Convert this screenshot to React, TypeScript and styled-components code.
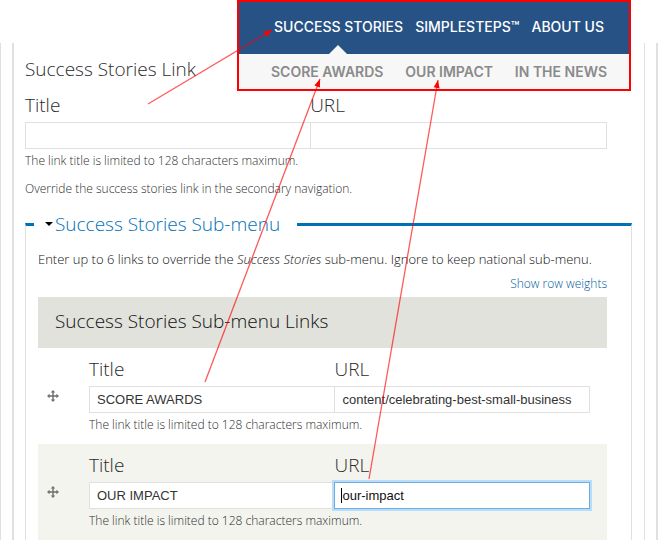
import styled, { createGlobalStyle, css } from "styled-components";

const color = {
  text: "#111111",
  title: "#2b2b2b",
  muted: "#2e2e2e",
  link: "#0071b8",
  linkDark: "#005c9c",
  line: "#e0e0e0",
  navy: "#265286",
  red: "#ff0000",
};

type LinkFieldsProps = {
  id: string;
  title?: string;
  url?: string;
  focused?: boolean;
};

const rows = [
  {
    id: "score-awards",
    title: "SCORE AWARDS",
    url: "content/celebrating-best-small-business",
  },
  { id: "our-impact", title: "OUR IMPACT", url: "our-impact", focused: true },
];

const arrows = [
  { from: [148, 104], to: [272, 30] },
  { from: [205, 382], to: [320, 79] },
  { from: [369, 479], to: [438, 80] },
];

function LinkFields({ id, title = "", url = "", focused }: LinkFieldsProps) {
  return (
    <>
      <FieldPair>
        <Field>
          <Label htmlFor={`${id}-title`}>Title</Label>
          <TextInput id={`${id}-title`} defaultValue={title} $joined />
        </Field>
        <Field>
          <Label htmlFor={`${id}-url`}>URL</Label>
          <InputWrap>
            <TextInput id={`${id}-url`} defaultValue={url} $focused={focused} />
            {focused && <Caret />}
          </InputWrap>
        </Field>
      </FieldPair>
      <Help>The link title is limited to 128 characters maximum.</Help>
    </>
  );
}

function MoveIcon() {
  return (
    <svg width="12" height="12" viewBox="0 0 12 12" fill="#6e6e6e">
      <path d="M6 0 8.2 2.6H6.7V5.3H9.4V3.8L12 6 9.4 8.2V6.7H6.7V9.4H8.2L6 12 3.8 9.4H5.3V6.7H2.6V8.2L0 6 2.6 3.8V5.3H5.3V2.6H3.8Z" />
    </svg>
  );
}

function NavPreview() {
  return (
    <StyledNav>
      <PrimaryLinks>
        <NavLink href="#stories" $active>
          SUCCESS STORIES
        </NavLink>
        <NavLink href="#simplesteps">SIMPLESTEPS™</NavLink>
        <NavLink href="#about">ABOUT US</NavLink>
      </PrimaryLinks>
      <SecondaryLinks>
        <NavLink href="#awards">SCORE AWARDS</NavLink>
        <NavLink href="#impact">OUR IMPACT</NavLink>
        <NavLink href="#news">IN THE NEWS</NavLink>
      </SecondaryLinks>
    </StyledNav>
  );
}

function Arrows() {
  return (
    <ArrowLayer width="672" height="540" viewBox="0 0 672 540">
      {arrows.map(({ from, to }) => {
        const angle =
          (Math.atan2(to[1] - from[1], to[0] - from[0]) * 180) / Math.PI;
        return (
          <g key={from[0]}>
            <line
              x1={from[0]}
              y1={from[1]}
              x2={to[0]}
              y2={to[1]}
              stroke={color.red}
              strokeWidth="1.3"
              strokeOpacity="0.65"
            />
            <path
              d="M0 0-8-3V3Z"
              fill={color.red}
              transform={`translate(${to[0]} ${to[1]}) rotate(${angle})`}
            />
          </g>
        );
      })}
    </ArrowLayer>
  );
}

export default function App() {
  return (
    <Page>
      <GlobalStyle />
      <OuterPanel>
        <InnerPanel>
          <LinkSection>
            <Heading>Success Stories Link</Heading>
            <LinkFields id="stories" />
            <Override>
              Override the success stories link in the secondary navigation.
            </Override>
          </LinkSection>
          <SubMenu>
            <Legend>
              <Toggle type="button">
                <Triangle />
                Success Stories Sub-menu
              </Toggle>
            </Legend>
            <Intro>
              Enter up to 6 links to override the <em>Success Stories</em>{" "}
              sub-menu. Ignore to keep national sub-menu.
            </Intro>
            <WeightsLink href="#weights">Show row weights</WeightsLink>
            <LinkTable>
              <thead>
                <tr>
                  <HeaderCell colSpan={2}>
                    Success Stories Sub-menu Links
                  </HeaderCell>
                </tr>
              </thead>
              <tbody>
                {rows.map((row) => (
                  <LinkRow key={row.id}>
                    <HandleCell>
                      <Handle type="button" aria-label="Drag to re-order">
                        <MoveIcon />
                      </Handle>
                    </HandleCell>
                    <FieldsCell>
                      <LinkFields {...row} />
                    </FieldsCell>
                  </LinkRow>
                ))}
              </tbody>
            </LinkTable>
          </SubMenu>
        </InnerPanel>
      </OuterPanel>
      <NavPreview />
      <Arrows />
    </Page>
  );
}

const GlobalStyle = createGlobalStyle`
  * {
    box-sizing: border-box;
  }

  body {
    margin: 0;
    background-color: #ffffff;
    color: ${color.text};
    font-family: "Open Sans", sans-serif;
    font-size: 13px;
    font-weight: 300;
    line-height: 20px;
  }
`;

const lightTitle = css`
  font-size: 19px;
  font-weight: 300;
  line-height: 26px;
`;

// Page frame
const Page = styled.main`
  position: relative;
  display: flex;
  min-height: 100vh;
  padding: 43px 14px 0 0;
`;

const OuterPanel = styled.div`
  flex: 1;
  display: flex;
  padding-right: 11px;
  padding-left: 11px;
  border: solid ${color.line};
  border-width: 0 2px 0 1px;
`;

const InnerPanel = styled.div`
  flex: 1;
  display: flex;
  flex-direction: column;
  padding: 13px 12px 0 11px;
  border: solid ${color.line};
  border-width: 0 1px 0 2px;
`;

const LinkSection = styled.section`
  padding-right: 25px;
`;

const Heading = styled.h2`
  margin: 0 0 10px;
  color: ${color.title};
  ${lightTitle};
`;

// Fields
const FieldPair = styled.div`
  display: grid;
  grid-template-columns: 49fr 51fr;
`;

const Field = styled.div`
  display: flex;
  flex-direction: column;
  gap: 4px;
  min-width: 0;
`;

const Label = styled.label`
  color: ${color.title};
  ${lightTitle};
`;

const InputWrap = styled.div`
  position: relative;
  display: flex;
`;

const TextInput = styled.input<{ $joined?: boolean; $focused?: boolean }>`
  width: 100%;
  height: 27px;
  padding: 0 7px;
  border: 1px solid ${color.line};
  border-right-width: ${({ $joined }) => ($joined ? "0" : "1px")};
  border-radius: 0;
  outline: none;
  background-color: #ffffff;
  color: #333333;
  font-family: "Liberation Sans", Arial, sans-serif;
  font-size: 13px;

  ${({ $focused }) =>
    $focused &&
    css`
      border-color: #6caee0;
      box-shadow: 0 0 0 2px #b9dcfa;
      color: #111111;
    `}
`;

const Caret = styled.span`
  position: absolute;
  top: 6px;
  left: 7px;
  width: 1px;
  height: 15px;
  background-color: #000000;
`;

const Help = styled.p`
  margin: 2px 0 0;
  color: ${color.muted};
  font-size: 12px;
`;

const Override = styled(Help)`
  margin: 8px 0 0;
`;

// Sub-menu
const SubMenu = styled.fieldset`
  flex: 1;
  min-width: 0;
  margin: 12px 0 0;
  padding: 12px 24px 0 12px;
  border: solid ${color.line};
  border-width: 3px 1px 0;
  border-top-color: ${color.link};
`;

const Legend = styled.legend`
  margin-left: -4px;
  padding: 0 17px 0 11px;
`;

const Toggle = styled.button`
  display: flex;
  align-items: center;
  gap: 2px;
  padding: 0;
  border: 0;
  background: none;
  color: ${color.link};
  font-family: inherit;
  ${lightTitle};
`;

const Triangle = styled.span`
  border: solid transparent;
  border-width: 4px 4px 0;
  border-top-color: #000000;
`;

const Intro = styled.p`
  margin: 0;
`;

const WeightsLink = styled.a`
  display: block;
  width: fit-content;
  margin: 5px 0 3px auto;
  color: ${color.linkDark};
  font-size: 12px;
  text-decoration: none;
`;

const LinkTable = styled.table`
  width: 100%;
  border-collapse: collapse;
`;

const HeaderCell = styled.th`
  height: 51px;
  padding: 0 17px 3px;
  background-color: #e1e2dc;
  color: ${color.text};
  text-align: left;
  ${lightTitle};
`;

const LinkRow = styled.tr`
  &:nth-child(even) {
    background-color: #f3f4ee;
  }
`;

const HandleCell = styled.td`
  width: 51px;
  padding: 0 0 0 9px;
  vertical-align: middle;
`;

const Handle = styled.button`
  display: flex;
  padding: 0;
  border: 0;
  background: none;
  cursor: move;
`;

const FieldsCell = styled.td`
  padding: 8px 17px 9px 0;
`;

// Navigation preview laid over the form
const StyledNav = styled.nav`
  position: absolute;
  top: 0;
  left: 237px;
  width: 394px;
  border: 2px solid ${color.red};
  font-family: Inter, sans-serif;
  font-size: 14px;
`;

const PrimaryLinks = styled.div`
  display: flex;
  justify-content: space-between;
  padding: 15px 25px 17px 35px;
  background-color: ${color.navy};
  color: #ffffff;
  font-weight: 500;
`;

const SecondaryLinks = styled.div`
  display: flex;
  justify-content: space-between;
  padding: 8px 22px 7px 32px;
  background-color: #f7f7f7;
  color: #8a8a8a;
  font-weight: 600;
`;

const NavLink = styled.a<{ $active?: boolean }>`
  position: relative;
  color: inherit;
  text-decoration: none;
  white-space: nowrap;

  ${({ $active }) =>
    $active &&
    css`
      &::after {
        content: "";
        position: absolute;
        bottom: -17px;
        left: calc(50% - 10px);
        border: solid transparent;
        border-width: 0 9px 9px;
        border-bottom-color: #f7f7f7;
      }
    `}
`;

const ArrowLayer = styled.svg`
  position: absolute;
  top: 0;
  left: 0;
  pointer-events: none;
`;
